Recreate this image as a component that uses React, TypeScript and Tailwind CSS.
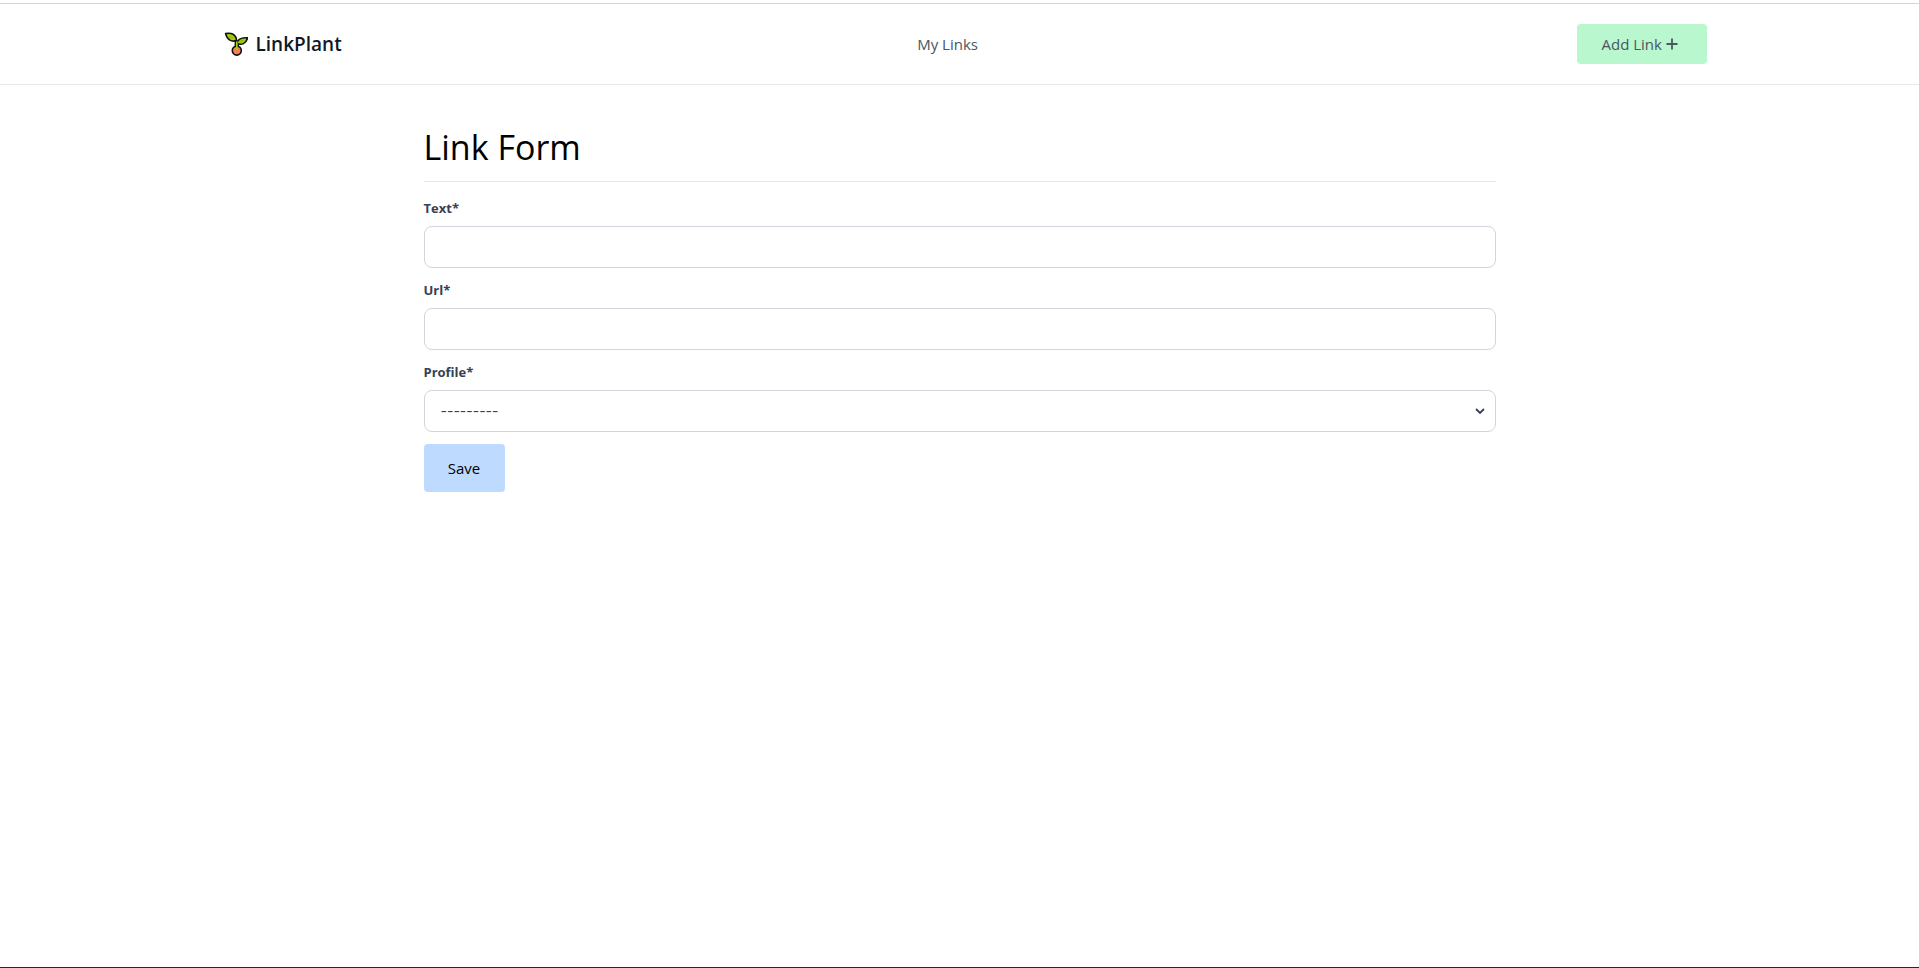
import React from "react";

function SproutLogo() {
  return (
    <svg viewBox="0 0 24 24" className="h-6 w-6" aria-hidden="true">
      <circle cx="12.8" cy="18.6" r="4.5" fill="#f4824a" stroke="#111111" strokeWidth="1.6" />
      <path d="M12.8 15V9" fill="none" stroke="#111111" strokeWidth="4.4" />
      <g stroke="#111111" strokeWidth="1.6" strokeLinejoin="round">
        <path d="M1.6 1.6C7.4 0.6 12 2.2 12.6 8.6C7.6 10.2 3.2 8 1.6 1.6Z" fill="#a4cf12" />
        <path d="M23.6 5.8C17.6 5.4 13.6 6.4 12.8 11.6C17.6 13.4 22.2 11.8 23.6 5.8Z" fill="#a4cf12" />
      </g>
      <path d="M12.8 18V9.5" stroke="#a4cf12" strokeWidth="1.7" fill="none" />
      <path d="M5.5 4.5L9.4 6M19.5 8.2L15.6 9.6" stroke="#7fb010" strokeWidth="0.9" fill="none" />
    </svg>
  );
}

function Header() {
  return (
    <header className="mt-[3px] border-t border-b border-t-gray-300 border-b-gray-200 text-gray-600">
      <div className="mx-auto flex max-w-screen-2xl items-center justify-between p-5">
        <a href="#" className="flex items-center gap-2 pl-3 text-gray-900">
          <SproutLogo />
          <span className="text-[19px] leading-7 font-semibold">LinkPlant</span>
        </a>
        <nav className="pr-6">
          <a href="#" className="text-[15px] leading-6">My Links</a>
        </nav>
        <a
          href="#"
          className="flex h-10 w-[130px] items-center gap-1 rounded bg-green-200 pl-6 text-[15px] leading-6"
        >
          Add Link
          <svg viewBox="0 0 12 12" className="h-3 w-3" aria-hidden="true">
            <path d="M6 0.5V11.5M0.5 6H11.5" stroke="currentColor" strokeWidth="1.8" fill="none" />
          </svg>
        </a>
      </div>
    </header>
  );
}

const labelClass = "mb-2 block text-[13px] leading-5 font-bold text-gray-700";
const fieldClass =
  "block h-[42px] w-full rounded-lg border border-gray-300 bg-white px-4 text-gray-700";

function TextField({ id, label }: { id: string; label: string }) {
  return (
    <div>
      <label htmlFor={id} className={labelClass}>{label}*</label>
      <input id={id} name={id} type="text" required className={fieldClass} />
    </div>
  );
}

function LinkForm() {
  return (
    <main className="mx-auto w-full max-w-6xl px-10 pt-10">
      <h1 className="border-b border-gray-200 pt-0.5 pb-3.5 text-[34px] leading-10 font-normal text-black">
        Link Form
      </h1>
      <form className="mt-4 flex flex-col gap-3">
        <TextField id="text" label="Text" />
        <TextField id="url" label="Url" />
        <div>
          <label htmlFor="profile" className={labelClass}>Profile*</label>
          <div className="relative">
            <select
              id="profile"
              name="profile"
              required
              className={`${fieldClass} appearance-none font-['Inter',sans-serif] text-sm`}
            >
              <option value="">---------</option>
            </select>
            <svg
              viewBox="0 0 20 20"
              className="pointer-events-none absolute top-1/2 right-1.5 h-5 w-5 -translate-y-1/2 text-gray-700"
              aria-hidden="true"
            >
              <path d="M6 8L10 12L14 8" stroke="currentColor" strokeWidth="1.8" fill="none" />
            </svg>
          </div>
        </div>
        <button type="submit" className="h-12 w-[81px] self-start rounded bg-blue-200 text-[15px] text-black">
          Save
        </button>
      </form>
    </main>
  );
}

export default function App() {
  return (
    <div className="flex min-h-screen flex-col border-b border-gray-800 bg-white font-['Open_Sans','Noto_Sans',sans-serif]">
      <Header />
      <LinkForm />
    </div>
  );
}
